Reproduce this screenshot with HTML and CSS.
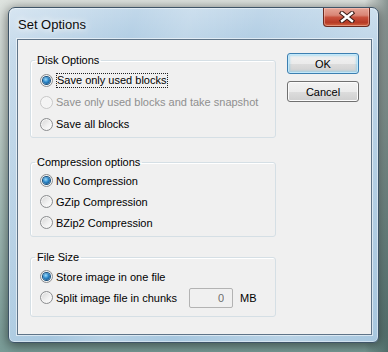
FILE: index.html
```html
<!DOCTYPE html>
<html lang="en">
<head>
  <meta charset="UTF-8" />
  <title>Set Options</title>
  <link rel="stylesheet" href="styles.css">
</head>
<body>
  <div class="window">
    <div class="titlebar">
      <span class="title">Set Options</span>
      <span class="close">
        <svg width="16" height="12" viewBox="0 0 16 12">
          <path d="M3 2 L13 10 M13 2 L3 10" stroke="#3b1a14" stroke-width="4.4" stroke-linecap="square" fill="none"/>
          <path d="M3 2 L13 10 M13 2 L3 10" stroke="#ffffff" stroke-width="2.4" stroke-linecap="square" fill="none"/>
        </svg>
      </span>
    </div>

    <div class="frame-body">
      <div class="client">
        <div class="groups">
          <fieldset class="group disk">
            <legend>Disk Options</legend>
            <label class="opt"><span class="radio checked"></span><span class="focus">Save only used blocks</span></label>
            <label class="opt disabled"><span class="radio"></span><span>Save only used blocks and take snapshot</span></label>
            <label class="opt"><span class="radio"></span><span>Save all blocks</span></label>
          </fieldset>

          <fieldset class="group compress">
            <legend>Compression options</legend>
            <label class="opt"><span class="radio checked"></span><span>No Compression</span></label>
            <label class="opt"><span class="radio"></span><span>GZip Compression</span></label>
            <label class="opt"><span class="radio"></span><span>BZip2 Compression</span></label>
          </fieldset>

          <fieldset class="group filesize">
            <legend>File Size</legend>
            <label class="opt"><span class="radio checked"></span><span>Store image in one file</span></label>
            <div class="opt">
              <span class="radio"></span>
              <span class="chunk-label">Split image file in chunks</span>
              <input class="chunk-size" type="text" value="0" disabled>
              <span class="unit">MB</span>
            </div>
          </fieldset>
        </div>

        <div class="buttons">
          <button class="btn default">OK</button>
          <button class="btn">Cancel</button>
        </div>
      </div>
    </div>
  </div>
</body>
</html>
```

FILE: styles.css
```css
body {
  margin: 0;
  padding: 7px 0 0 8px;
  width: 388px;
  height: 352px;
  box-sizing: border-box;
  overflow: hidden;
  font-family: 'Liberation Sans', Arial, sans-serif;
  font-size: 11px;
  color: #000;
  background:
    linear-gradient(to right, rgba(30,50,50,0) 0%, rgba(30,50,50,0) 94%, rgba(30,50,50,0.45) 100%),
    linear-gradient(to bottom, #dfe4e0 0%, #c6d4cf 30%, #9bb7b2 70%, #7a9d98 100%);
}

.window {
  width: 371px;
  height: 336px;
  box-sizing: border-box;
  border: 1px solid #3e5467;
  border-radius: 7px 7px 6px 6px;
  background:
    linear-gradient(105deg, rgba(255,255,255,0.35) 0%, rgba(255,255,255,0) 28%, rgba(255,255,255,0.18) 40%, rgba(255,255,255,0) 55%, rgba(255,255,255,0.2) 80%, rgba(255,255,255,0) 100%),
    linear-gradient(to bottom, #c2d8ea 0%, #aecbe2 12%, #a7c7df 100%);
  box-shadow: inset 0 0 0 1px rgba(255,255,255,0.45), 0 2px 12px 1px rgba(0,0,0,0.5);
  display: flex;
  flex-direction: column;
}

.titlebar {
  height: 31px;
  flex-shrink: 0;
  display: flex;
  align-items: flex-start;
  padding-left: 9px;
}

.title {
  margin-top: 9px;
  font-size: 13px;
  line-height: 15px;
  color: #0b0b0b;
  text-shadow: 0 0 6px #fff, 0 0 10px rgba(255,255,255,0.9);
}

.close {
  margin-left: auto;
  margin-right: 8px;
  width: 47px;
  height: 19px;
  box-sizing: border-box;
  border: 1px solid #6b2a20;
  border-top: none;
  border-radius: 0 0 4px 4px;
  background: linear-gradient(to bottom, #e6a597 0%, #d98676 40%, #c8513d 52%, #b73a26 80%, #d1643f 100%);
  box-shadow: inset 0 0 0 1px rgba(255,210,200,0.45);
  display: flex;
  align-items: center;
  justify-content: center;
}

.frame-body {
  flex: 1;
  display: flex;
  padding: 0 6px 7px 8px;
}

.client {
  flex: 1;
  display: flex;
  gap: 11px;
  padding: 13px 0 0 12px;
  border: 1px solid #5f7488;
  background: #f0f0f0;
  box-shadow: 0 0 0 1px rgba(255,255,255,0.55);
}

.groups {
  margin-top: 1px;
  width: 246px;
  display: flex;
  flex-direction: column;
}

.group {
  margin: 0;
  padding: 0 0 0 4px;
  min-width: 0;
  border: 1px solid #d5dfe5;
  border-radius: 3px;
  box-shadow: inset 1px 1px 0 #fff;
}

.group legend {
  padding: 0 2px;
  line-height: 13px;
}

.disk {
  padding-top: 2px;
  padding-bottom: 2px;
}

.disk .opt {
  height: 22px;
}

.compress {
  margin-top: 18px;
  padding-top: 1px;
  padding-bottom: 3px;
}

.filesize {
  margin-top: 14px;
  padding-top: 2px;
  padding-bottom: 8px;
}

.opt {
  height: 21px;
  display: flex;
  align-items: center;
}

.opt.disabled {
  color: #8f8f8f;
}

.radio {
  width: 13px;
  height: 13px;
  box-sizing: border-box;
  margin: 0 3px 0 5px;
  flex-shrink: 0;
  border: 1px solid #8b8d8f;
  border-radius: 50%;
  background: linear-gradient(135deg, #d4d4d4 0%, #f2f2f2 60%, #fdfdfd 100%);
  box-shadow: inset 0 0 0 1px #f6f6f6;
  display: flex;
  align-items: center;
  justify-content: center;
}

.disabled .radio {
  border-color: #c8c8c8;
  background: #f4f4f4;
}

.radio.checked::after {
  content: '';
  width: 7px;
  height: 7px;
  border-radius: 50%;
  background: radial-gradient(circle at 40% 35%, #9fdcfb 0%, #2b86c8 45%, #0b3f70 100%);
  box-shadow: 0 0 0 1px #17507e;
}

.focus {
  border: 1px dotted #222;
  padding: 0 1px 0 0;
  line-height: 13px;
}

.chunk-label {
  width: 133px;
}

.chunk-size {
  width: 44px;
  height: 20px;
  box-sizing: border-box;
  margin: 0;
  padding: 0 8px 0 0;
  border: 1px solid #b3b3b3;
  border-radius: 2px;
  background: #f0f0f0;
  color: #6d6d6d;
  font-family: inherit;
  font-size: 11px;
  text-align: right;
}

.unit {
  margin-left: 7px;
}

.buttons {
  display: flex;
  flex-direction: column;
  gap: 7px;
}

.btn {
  width: 72px;
  height: 21px;
  padding: 0;
  border: 1px solid #707070;
  border-radius: 3px;
  background: linear-gradient(to bottom, #f2f2f2 0%, #ebebeb 50%, #dddddd 51%, #cfcfcf 100%);
  box-shadow: inset 0 0 0 1px #fbfbfb;
  font-family: inherit;
  font-size: 11px;
  color: #000;
}

.btn.default {
  border-color: #3c7fb1;
  box-shadow: inset 0 0 0 1px #c3e8fa, inset 0 0 2px 2px rgba(120,205,245,0.5);
}
```
